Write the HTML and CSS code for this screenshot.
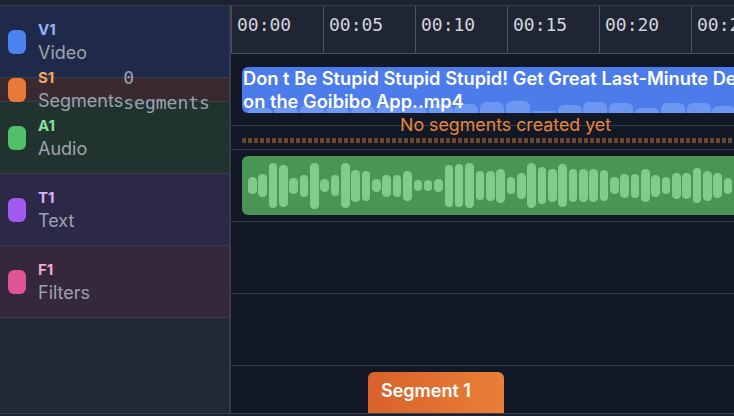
FILE: index.html
```html
<!DOCTYPE html>
<html lang="en">
<head>
<meta charset="utf-8">
<title>Timeline</title>
<link rel="stylesheet" href="styles.css">
</head>
<body>
<div class="topbar"></div>
<div class="editor">
  <div class="sidebar">
    <div class="head head-video">
      <span class="pill"></span>
      <div class="meta"><div class="code">V1</div><div class="name">Video</div></div>
    </div>
    <div class="head head-seg short">
      <span class="pill"></span>
      <div class="meta"><div class="code">S1</div><div class="name">Segments</div></div>
      <div class="count">0 segments</div>
    </div>
    <div class="head head-audio">
      <span class="pill"></span>
      <div class="meta"><div class="code">A1</div><div class="name">Audio</div></div>
    </div>
    <div class="head head-text">
      <span class="pill"></span>
      <div class="meta"><div class="code">T1</div><div class="name">Text</div></div>
    </div>
    <div class="head head-filter">
      <span class="pill"></span>
      <div class="meta"><div class="code">F1</div><div class="name">Filters</div></div>
    </div>
  </div>

  <div class="timeline">
    <div class="ruler">
      <div class="tick">00:00</div>
      <div class="tick">00:05</div>
      <div class="tick">00:10</div>
      <div class="tick">00:15</div>
      <div class="tick">00:20</div>
      <div class="tick">00:25</div>
      <div class="tick">00:30</div>
    </div>

    <div class="lane">
      <div class="clip video-clip">
        <div class="thumbs">
          <span style="height:5px"></span><span style="height:6px"></span><span style="height:8px"></span><span style="height:6px"></span><span style="height:7px"></span><span style="height:8px"></span><span style="height:6px"></span><span style="height:9px"></span><span style="height:9px"></span><span style="height:11px"></span><span style="height:12px"></span><span style="height:1.5px"></span><span style="height:8px"></span><span style="height:11px"></span><span style="height:10px"></span><span style="height:5px"></span><span style="height:10px"></span><span style="height:10px"></span><span style="height:7px"></span><span style="height:8px"></span><span style="height:6px"></span>
        </div>
        <div class="clip-title"><span class="title-line">Don t Be Stupid Stupid Stupid! Get Great Last-Minute Deals</span> <span class="title-line">on the Goibibo App..mp4</span></div>
      </div>
    </div>

    <div class="lane seg-lane">
      <div class="dash"></div>
      <div class="empty-msg">No segments created yet</div>
    </div>

    <div class="lane">
      <div class="clip audio-clip">
        <span style="height:17px"></span><span style="height:23px"></span><span style="height:45px"></span><span style="height:42px"></span><span style="height:16px"></span><span style="height:22px"></span><span style="height:46px"></span><span style="height:13px"></span><span style="height:21px"></span><span style="height:45px"></span><span style="height:32px"></span><span style="height:30px"></span><span style="height:13px"></span><span style="height:22px"></span><span style="height:22px"></span><span style="height:30px"></span><span style="height:11px"></span><span style="height:11px"></span><span style="height:13px"></span><span style="height:42px"></span><span style="height:43px"></span><span style="height:45px"></span><span style="height:29px"></span><span style="height:30px"></span><span style="height:34px"></span><span style="height:17px"></span><span style="height:26px"></span><span style="height:45px"></span><span style="height:37px"></span><span style="height:33px"></span><span style="height:43px"></span><span style="height:33px"></span><span style="height:33px"></span><span style="height:33px"></span><span style="height:31px"></span><span style="height:17px"></span><span style="height:24px"></span><span style="height:24px"></span><span style="height:33px"></span><span style="height:22px"></span><span style="height:17px"></span><span style="height:26px"></span><span style="height:26px"></span><span style="height:35px"></span><span style="height:30px"></span><span style="height:25px"></span><span style="height:16px"></span><span style="height:22px"></span><span style="height:30px"></span><span style="height:17px"></span>
      </div>
    </div>

    <div class="lane"></div>
    <div class="lane"></div>

    <div class="lane">
      <div class="segment-block" style="margin-left:126px;width:136px">Segment 1</div>
    </div>
  </div>
</div>
</body>
</html>
```

FILE: styles.css
```css
* { box-sizing: border-box; }

body {
  margin: 0;
  width: 734px;
  height: 416px;
  overflow: hidden;
  background: #1c2230;
  font-family: Inter, "Noto Sans", sans-serif;
}

.topbar {
  height: 6px;
  background: #1c2230;
  border-bottom: 1px solid #363c4a;
}

.editor {
  display: flex;
  height: 408px;
  border-bottom: 1px solid #3a4050;
  overflow: hidden;
}

/* ---------- sidebar ---------- */
.sidebar {
  width: 231px;
  flex-shrink: 0;
  background: #222834;
  border-right: 2px solid #363c4a;
}

.head {
  display: flex;
  align-items: center;
  height: 72px;
  padding-left: 8px;
  border-bottom: 1px solid #3a4050;
}
.head.short { height: 24px; }

.pill {
  width: 18px;
  height: 24px;
  border-radius: 6px;
  flex-shrink: 0;
  margin-right: 12px;
}

.meta {
  display: flex;
  flex-direction: column;
  flex-shrink: 0;
}
.code {
  font-size: 15px;
  line-height: 22px;
  font-weight: 700;
}
.name {
  font-size: 18px;
  line-height: 23px;
  color: #9ca3af;
}
.count {
  width: min-content;
  font-family: "DejaVu Sans Mono", "Liberation Mono", monospace;
  font-size: 18px;
  line-height: 25px;
  color: #9ca3af;
}

.head-video { background: #1f2a4a; }
.head-video .pill { background: #4b82f0; }
.head-video .code { color: #90b4fb; }

.head-seg { background: #3a2a2f; }
.head-seg .pill { background: #e87a38; }
.head-seg .code { color: #f3a860; }

.head-audio { background: #21332f; }
.head-audio .pill { background: #4fc16a; }
.head-audio .code { color: #86e29a; }

.head-text { background: #2c2848; }
.head-text .pill { background: #a259f0; }
.head-text .code { color: #d6b4fb; }

.head-filter { background: #35283a; }
.head-filter .pill { background: #df5497; }
.head-filter .code { color: #f5a8cf; }

/* ---------- timeline ---------- */
.timeline {
  flex: 1;
  min-width: 0;
  background: #131826;
  overflow: hidden;
}

.ruler {
  display: flex;
  height: 48px;
  background: #1f2533;
  border-bottom: 1px solid #4a5162;
}
.tick {
  width: 92px;
  flex-shrink: 0;
  border-left: 1px solid #4a5162;
  padding: 6px 5px 0 5px;
  font-family: "DejaVu Sans Mono", "Liberation Mono", monospace;
  font-size: 18px;
  line-height: 25px;
  color: #d1d5db;
}

.lane {
  display: flex;
  align-items: center;
  height: 72px;
  padding-left: 11px;
  border-bottom: 1px solid #343a48;
}

.clip {
  width: 527px;
  flex-shrink: 0;
  border-radius: 6px;
  overflow: hidden;
}

.video-clip {
  height: 46px;
  display: grid;
  background: #4b7ce9;
}
.thumbs {
  grid-area: 1 / 1;
  align-self: end;
  display: flex;
  align-items: flex-end;
  gap: 1.8px;
  padding-left: 6px;
}
.thumbs span {
  width: 24px;
  flex-shrink: 0;
  background: #6c98f1;
  border-radius: 6px 6px 0 0;
}
.clip-title {
  grid-area: 1 / 1;
  padding-left: 1px;
  font-size: 18.3px;
  line-height: 23px;
  font-weight: 600;
  color: #ffffff;
}
.title-line {
  display: block;
  white-space: nowrap;
}

.seg-lane {
  display: grid;
  grid-template-columns: 527px;
  align-items: start;
  height: 24px;
}
.dash {
  grid-area: 1 / 1;
  margin-top: 12px;
  height: 5px;
  border-radius: 2px;
  background: repeating-linear-gradient(90deg, #6e462e 0 4px, transparent 4px 6px);
}
.empty-msg {
  grid-area: 1 / 1;
  justify-self: center;
  margin-top: -11px;
  font-size: 17.8px;
  line-height: 20px;
  color: #e8873a;
}

.audio-clip {
  height: 59px;
  display: flex;
  align-items: center;
  gap: 1.75px;
  padding-left: 6px;
  background: #4a9556;
}
.audio-clip span {
  width: 8.6px;
  flex-shrink: 0;
  border-radius: 4.3px;
  background: #80cc8c;
}

.segment-block {
  flex-shrink: 0;
  align-self: flex-start;
  margin-top: 6px;
  height: 59px;
  padding: 8px 13px;
  border-radius: 6px;
  background: linear-gradient(90deg, #d8622a, #ea7f37);
  font-size: 18px;
  line-height: 22px;
  font-weight: 600;
  color: #ffffff;
}
```
